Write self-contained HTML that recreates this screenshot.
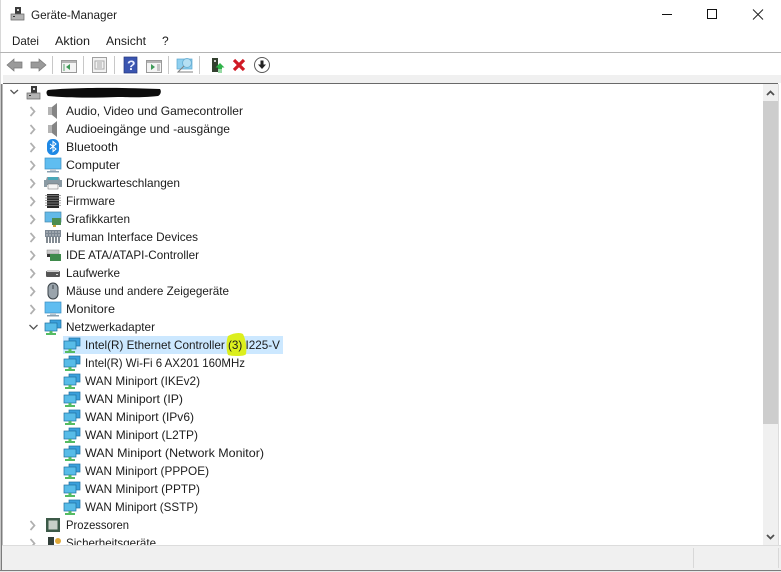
<!DOCTYPE html>
<html><head><meta charset="utf-8"><style>
html,body{margin:0;padding:0;background:#fff;overflow:hidden}
svg{display:block}
text{font-family:"Liberation Sans",sans-serif;font-size:12px;fill:#1c1c1c}
</style></head><body>
<svg width="781" height="572" viewBox="0 0 781 572" xmlns="http://www.w3.org/2000/svg">
<defs>
<g id="spk"><path d="M0 -4h4v8H0z" fill="#b4b4b4"/><path d="M4 -4l5-4v16l-5-4z" fill="#858585"/></g>
<g id="chev"><path d="M-2.500 -4l4 4.500-4 4.500" fill="none" stroke="#b0b0b0" stroke-width="1.700"/></g>
<g id="net"><rect x="5" y="-7" width="11" height="8" fill="#3aa0dc" stroke="#1f6f9f" stroke-width=".7"/><rect x="0" y="-4" width="12" height="8" fill="#58bce8" stroke="#1f6f9f" stroke-width=".7"/><path d="M4.500 4h3v2h3.500v2H1V6h3.500z" fill="#55bb62"/></g>
<g id="mon"><rect x="0" y="-7" width="16" height="11" fill="#5fbdf0" stroke="#3b8fc2" stroke-width=".7"/><path d="M5 4h6v2H5z" fill="#b8c8d4"/><path d="M2 6h12v1.500H2z" fill="#8aa0b0"/></g>
<g id="srv"><path d="M4 -7h6v7H4z" fill="#3c3c3c"/><rect x="6" y="-5" width="2" height="2" fill="#d8d8d8"/><path d="M0 0h13v6H0z" fill="#b4b4b4" stroke="#666" stroke-width=".7"/><rect x="2" y="2" width="2" height="1" fill="#333"/></g>
</defs>

<!-- window frame -->
<rect width="781" height="572" fill="#fff"/>
<rect x="0" y="0" width="1" height="84" fill="#d8d8d8"/>

<!-- title bar -->
<use href="#srv" x="11" y="14"/>
<text x="31" y="19" textLength="86" lengthAdjust="spacingAndGlyphs">Geräte-Manager</text>
<path d="M662 14.500h10" stroke="#111" stroke-width="1"/>
<rect x="707.500" y="9.500" width="9" height="9" fill="none" stroke="#111"/>
<path d="M753 9.500l10 10M763 9.500l-10 10" stroke="#222" stroke-width="1"/>

<!-- menu -->
<text x="12" y="45" textLength="27" lengthAdjust="spacingAndGlyphs">Datei</text>
<text x="55" y="45" textLength="35" lengthAdjust="spacingAndGlyphs">Aktion</text>
<text x="106" y="45" textLength="40" lengthAdjust="spacingAndGlyphs">Ansicht</text>
<text x="162" y="45" style="font-size:12px">?</text>
<rect x="0" y="52" width="781" height="1" fill="#b4b4b4"/>

<!-- toolbar -->
<path d="M7 65l7-6v3h8v6h-8v3z" fill="#9a9a9a" stroke="#777" stroke-width=".7"/>
<path d="M46 65l-7-6v3h-8v6h8v3z" fill="#9a9a9a" stroke="#777" stroke-width=".7"/>
<rect x="52" y="56" width="1" height="18" fill="#c8c8c8"/>
<rect x="61.500" y="60.500" width="15" height="12" fill="#f4f4f4" stroke="#999"/><rect x="62" y="61" width="14" height="2" fill="#b5b5b5"/><path d="M70 64v6l-4-3z" fill="#3f9a58"/><rect x="63" y="64" width="2" height="7" fill="#a8cbb2"/>
<rect x="83" y="56" width="1" height="18" fill="#c8c8c8"/>
<rect x="92.500" y="57.500" width="14" height="15" fill="#f2f2f2" stroke="#a0a0a0"/><path d="M95 61h9v8h-9zM97 63h5M97 65h5M97 67h5" fill="none" stroke="#aaa"/>
<rect x="114" y="56" width="1" height="18" fill="#c8c8c8"/>
<rect x="124" y="57" width="13" height="16" fill="#3a55b0" stroke="#24367c" stroke-width=".7"/>
<text x="127" y="70" style="font-size:14px;font-weight:bold;fill:#e8ecff">?</text>
<rect x="146.500" y="60.500" width="15" height="12" fill="#f4f4f4" stroke="#999"/><rect x="147" y="61" width="14" height="2" fill="#b5b5b5"/><path d="M151 64v6l4-3z" fill="#3f9a58"/><rect x="157" y="64" width="3" height="7" fill="#c5c5c5"/>
<rect x="168" y="56" width="1" height="18" fill="#c8c8c8"/>
<rect x="177" y="59" width="15" height="10" fill="#8fd0f0" stroke="#5ba6cf" stroke-width=".7"/><circle cx="187" cy="63" r="4.500" fill="#b5dff3" stroke="#6cb2d6"/><path d="M184 66l-6 6h15" fill="none" stroke="#808080"/>
<rect x="199" y="56" width="1" height="18" fill="#c8c8c8"/>
<rect x="212" y="58" width="6" height="14" fill="#33402f"/><rect x="214" y="60" width="2" height="2" fill="#ccc"/><path d="M220 63l4.500 4.500h-2.500v1.500h-4v-1.500h-2.500z" fill="#2fb34a"/><path d="M218 70h4M218 72h4" stroke="#2fb34a"/>
<path d="M234 60l10 10M244 60l-10 10" stroke="#d01a25" stroke-width="3.200"/>
<circle cx="262" cy="65" r="7.500" fill="#fff" stroke="#5a5a5a"/><path d="M260.500 60.500h3v4h2.500l-4 4.500-4-4.500h2.500z" fill="#222"/>

<!-- band above tree -->
<rect x="3" y="75" width="778" height="8" fill="#f0f0f0"/>
<rect x="3" y="83" width="775" height="1" fill="#696969"/>
<rect x="0" y="84" width="1" height="486" fill="#c8c8c8"/>
<rect x="1" y="84" width="1" height="486" fill="#7c7c7c"/>
<rect x="2" y="84" width="1" height="462" fill="#bdbdbd"/>

<!-- scrollbar -->
<rect x="763" y="84" width="15" height="462" fill="#f0f0f0"/>
<rect x="763" y="101" width="15" height="323" fill="#cdcdcd"/>
<path d="M767 95l3.500-3.500 3.500 3.500" fill="none" stroke="#505050" stroke-width="1.800"/>
<path d="M767 535l3.500 3.500 3.500-3.500" fill="none" stroke="#505050" stroke-width="1.800"/>
<rect x="778" y="84" width="1" height="462" fill="#dcdcdc"/>

<!-- root -->
<path d="M10.500 90l3.500 3.500 4-3.500" fill="none" stroke="#555" stroke-width="1.300"/>
<use href="#srv" x="27" y="93"/>
<path d="M48 90c20-2 60-3 112-1 2 3 0 6-2 7-20 2-30 1-40 1-25 1-50 1-70-1-2-2-2-5 0-6z" fill="#0c0c0c"/>

<!-- selection -->
<rect x="63" y="336" width="220" height="18" fill="#cce8ff"/>
<path d="M228 336c5-3 12-4 15-2 3 6 4 14 3 20-1 3-16 2-18 1-2-5-2-14 0-19z" fill="#dcef1e"/>

<!-- chevrons -->
<use href="#chev" x="33" y="111"/><use href="#chev" x="33" y="129"/><use href="#chev" x="33" y="147"/>
<use href="#chev" x="33" y="165"/><use href="#chev" x="33" y="183"/><use href="#chev" x="33" y="201"/>
<use href="#chev" x="33" y="219"/><use href="#chev" x="33" y="237"/><use href="#chev" x="33" y="255"/>
<use href="#chev" x="33" y="273"/><use href="#chev" x="33" y="291"/><use href="#chev" x="33" y="309"/>
<path d="M29.500 325l4 4 4-4" fill="none" stroke="#555" stroke-width="1.300"/>
<use href="#chev" x="33" y="525"/><use href="#chev" x="33" y="543"/>

<!-- category icons -->
<use href="#spk" x="48" y="111"/>
<use href="#spk" x="48" y="129"/>
<rect x="47" y="139" width="12" height="16" rx="5.500" fill="#1e88e5"/><path d="M50 144l6 5-3 2.500v-10l3 2.500-6 5" fill="none" stroke="#fff" stroke-width="1"/>
<use href="#mon" x="45" y="165"/>
<path d="M47 177h12l1 3h2v7h-3v-2H47v2h-3v-7h2z" fill="#8b9aa3"/><rect x="48" y="177" width="10" height="3" fill="#49a7b8"/><rect x="48" y="184" width="10" height="5" fill="#f6f6f6" stroke="#666" stroke-width=".5"/>
<rect x="47" y="194" width="12" height="14" fill="#2a2a2a"/><path d="M45 195.500h16M45 198h16M45 200.500h16M45 203h16M45 205.500h16" stroke="#8a8a8a" stroke-width=".8"/>
<rect x="45" y="212" width="16" height="10" fill="#63b9e8" stroke="#4789ad" stroke-width=".7"/><rect x="52" y="218" width="9" height="7" fill="#4b8d50"/><rect x="53" y="225" width="3" height="2" fill="#c9a33a"/>
<rect x="45" y="230" width="16" height="7" fill="#7c8792"/><path d="M46 232h14M46 235h14" stroke="#d5dade" stroke-width=".8" stroke-dasharray="2 1"/><path d="M47 237v6M50 237v6M53 237v6M56 237v6M59 237v6" stroke="#59636d" stroke-width="1.500"/>
<rect x="47" y="250" width="12" height="4" fill="#c8c8c8" stroke="#888" stroke-width=".5"/><rect x="50" y="254" width="11" height="7" fill="#3f8a4b"/><rect x="47" y="254" width="3" height="3" fill="#333"/>
<rect x="46" y="271" width="14" height="6" rx="1" fill="#555"/><rect x="47" y="270" width="12" height="2" fill="#d0d0d0"/><rect x="56" y="274" width="2" height="1" fill="#ddd"/>
<rect x="48" y="283" width="10" height="16" rx="5" fill="#9aa4ac" stroke="#3a4248" stroke-width="1"/><rect x="52.500" y="285" width="1" height="4" fill="#3a4248"/>
<use href="#mon" x="45" y="309"/>
<use href="#net" x="45" y="327"/>
<rect x="46" y="518" width="14" height="14" fill="#3c5a48"/><rect x="48.500" y="520.500" width="9" height="9" fill="#c8d0c8"/>
<rect x="48" y="537" width="6" height="9" fill="#33403a"/><circle cx="58" cy="541" r="3" fill="#e0a93a"/>

<!-- child icons -->
<use href="#net" x="64" y="345"/><use href="#net" x="64" y="363"/><use href="#net" x="64" y="381"/>
<use href="#net" x="64" y="399"/><use href="#net" x="64" y="417"/><use href="#net" x="64" y="435"/>
<use href="#net" x="64" y="453"/><use href="#net" x="64" y="471"/><use href="#net" x="64" y="489"/>
<use href="#net" x="64" y="507"/>

<!-- tree text -->
<text x="66" y="115" textLength="177" lengthAdjust="spacingAndGlyphs">Audio, Video und Gamecontroller</text>
<text x="66" y="133" textLength="164" lengthAdjust="spacingAndGlyphs">Audioeingänge und -ausgänge</text>
<text x="66" y="151" textLength="52" lengthAdjust="spacingAndGlyphs">Bluetooth</text>
<text x="66" y="169" textLength="54" lengthAdjust="spacingAndGlyphs">Computer</text>
<text x="66" y="187" textLength="114" lengthAdjust="spacingAndGlyphs">Druckwarteschlangen</text>
<text x="66" y="205" textLength="49" lengthAdjust="spacingAndGlyphs">Firmware</text>
<text x="66" y="223" textLength="64" lengthAdjust="spacingAndGlyphs">Grafikkarten</text>
<text x="66" y="241" textLength="132" lengthAdjust="spacingAndGlyphs">Human Interface Devices</text>
<text x="66" y="259" textLength="133" lengthAdjust="spacingAndGlyphs">IDE ATA/ATAPI-Controller</text>
<text x="66" y="277" textLength="54" lengthAdjust="spacingAndGlyphs">Laufwerke</text>
<text x="66" y="295" textLength="163" lengthAdjust="spacingAndGlyphs">Mäuse und andere Zeigegeräte</text>
<text x="66" y="313" textLength="49" lengthAdjust="spacingAndGlyphs">Monitore</text>
<text x="66" y="331" textLength="89" lengthAdjust="spacingAndGlyphs">Netzwerkadapter</text>
<text x="85" y="349" textLength="195" lengthAdjust="spacingAndGlyphs">Intel(R) Ethernet Controller (3) I225-V</text>
<text x="85" y="367" textLength="160" lengthAdjust="spacingAndGlyphs">Intel(R) Wi-Fi 6 AX201 160MHz</text>
<text x="85" y="385" textLength="115" lengthAdjust="spacingAndGlyphs">WAN Miniport (IKEv2)</text>
<text x="85" y="403" textLength="98" lengthAdjust="spacingAndGlyphs">WAN Miniport (IP)</text>
<text x="85" y="421" textLength="109" lengthAdjust="spacingAndGlyphs">WAN Miniport (IPv6)</text>
<text x="85" y="439" textLength="113" lengthAdjust="spacingAndGlyphs">WAN Miniport (L2TP)</text>
<text x="85" y="457" textLength="179" lengthAdjust="spacingAndGlyphs">WAN Miniport (Network Monitor)</text>
<text x="85" y="475" textLength="124" lengthAdjust="spacingAndGlyphs">WAN Miniport (PPPOE)</text>
<text x="85" y="493" textLength="115" lengthAdjust="spacingAndGlyphs">WAN Miniport (PPTP)</text>
<text x="85" y="511" textLength="113" lengthAdjust="spacingAndGlyphs">WAN Miniport (SSTP)</text>
<text x="66" y="529" textLength="63" lengthAdjust="spacingAndGlyphs">Prozessoren</text>
<text x="66" y="547" textLength="90" lengthAdjust="spacingAndGlyphs">Sicherheitsgeräte</text>

<!-- status bar -->
<rect x="2" y="546" width="779" height="24" fill="#f0f0f0"/>
<rect x="2" y="545" width="779" height="1" fill="#dcdcdc"/>
<rect x="693" y="548" width="1" height="20" fill="#d8d8d8"/>
<rect x="778" y="548" width="1" height="20" fill="#d8d8d8"/>
<rect x="0" y="570" width="781" height="1" fill="#7c7c7c"/>
<rect x="0" y="571" width="781" height="1" fill="#e8e8e8"/>
</svg>
</body></html>
